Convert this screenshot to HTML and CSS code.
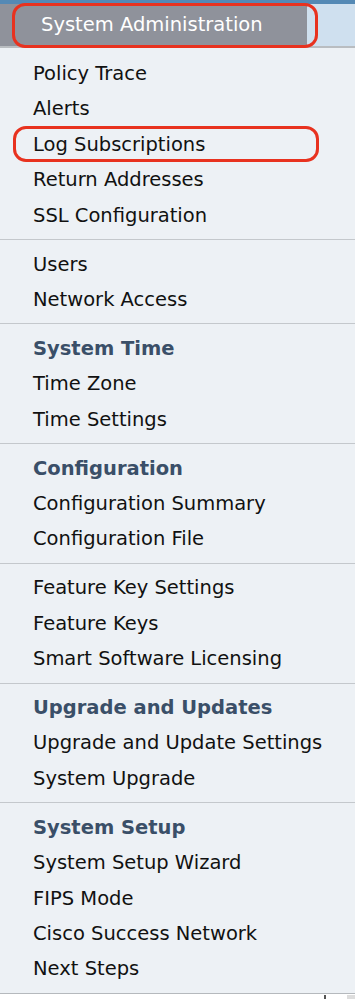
FILE: index.html
```html
<!DOCTYPE html>
<html lang="en">
<head>
    <meta charset="UTF-8">
    <meta name="viewport" content="width=device-width, initial-scale=1.0">
    <title>System Administration</title>
    <link rel="stylesheet" href="styles.css">
</head>
<body>
    <header class="topbar">
        <div class="tab marked">System Administration</div>
    </header>
    <nav class="menu">
        <ul class="group">
            <li>Policy Trace</li>
            <li>Alerts</li>
            <li class="marked">Log Subscriptions</li>
            <li>Return Addresses</li>
            <li>SSL Configuration</li>
        </ul>
        <ul class="group">
            <li>Users</li>
            <li>Network Access</li>
        </ul>
        <ul class="group">
            <li class="heading">System Time</li>
            <li>Time Zone</li>
            <li>Time Settings</li>
        </ul>
        <ul class="group">
            <li class="heading">Configuration</li>
            <li>Configuration Summary</li>
            <li>Configuration File</li>
        </ul>
        <ul class="group">
            <li>Feature Key Settings</li>
            <li>Feature Keys</li>
            <li>Smart Software Licensing</li>
        </ul>
        <ul class="group">
            <li class="heading">Upgrade and Updates</li>
            <li>Upgrade and Update Settings</li>
            <li>System Upgrade</li>
        </ul>
        <ul class="group">
            <li class="heading">System Setup</li>
            <li>System Setup Wizard</li>
            <li>FIPS Mode</li>
            <li>Cisco Success Network</li>
            <li>Next Steps</li>
        </ul>
    </nav>
    <div class="footer">
        <span class="tick"></span>
        <span class="shade"></span>
    </div>
</body>
</html>
```

FILE: styles.css
```css
body {
    margin: 0;
    background-color: #fff;
    font-family: 'DejaVu Sans', Verdana, sans-serif;
    color: #111;
}
.topbar {
    display: flex;
    height: 42px;
    background-color: #cfe0ef;
    border-top: 4px solid #5489b5;
    border-bottom: 2px solid #b9bdc1;
}
.tab {
    width: 266px;
    padding-left: 41px;
    background-color: #8f929b;
    color: #fff;
    font-size: 19.5px;
    line-height: 41px;
}
.menu {
    background-color: #edf1f5;
    border-bottom: 1px solid #b5b9bd;
}
.group {
    list-style: none;
    margin: 0;
    padding: 6.5px 0 6px;
    border-top: 1px solid #c4c8cc;
}
.group:first-child {
    border-top: none;
    padding-top: 8px;
}
.group li {
    padding-left: 33px;
    font-size: 19.5px;
    line-height: 35.4px;
}
.group .heading {
    font-weight: bold;
    color: #3a4f68;
}
/* red annotation rings */
.marked {
    position: relative;
}
.marked::after {
    content: "";
    position: absolute;
    top: 1px;
    bottom: 0;
    left: 12px;
    width: 300px;
    border: 3px solid #e8321f;
    border-radius: 13px;
}
.tab.marked::after {
    top: -1px;
    bottom: -2px;
}
.group .marked::after {
    top: -1px;
    bottom: 0;
    left: 13px;
}
.footer {
    position: relative;
    height: 8px;
}
.tick {
    position: absolute;
    left: 324px;
    top: 1px;
    width: 2px;
    height: 7px;
    background-color: #555;
}
.shade {
    position: absolute;
    left: 347px;
    top: 1px;
    width: 8px;
    height: 7px;
    background-color: #ddd;
}
```
